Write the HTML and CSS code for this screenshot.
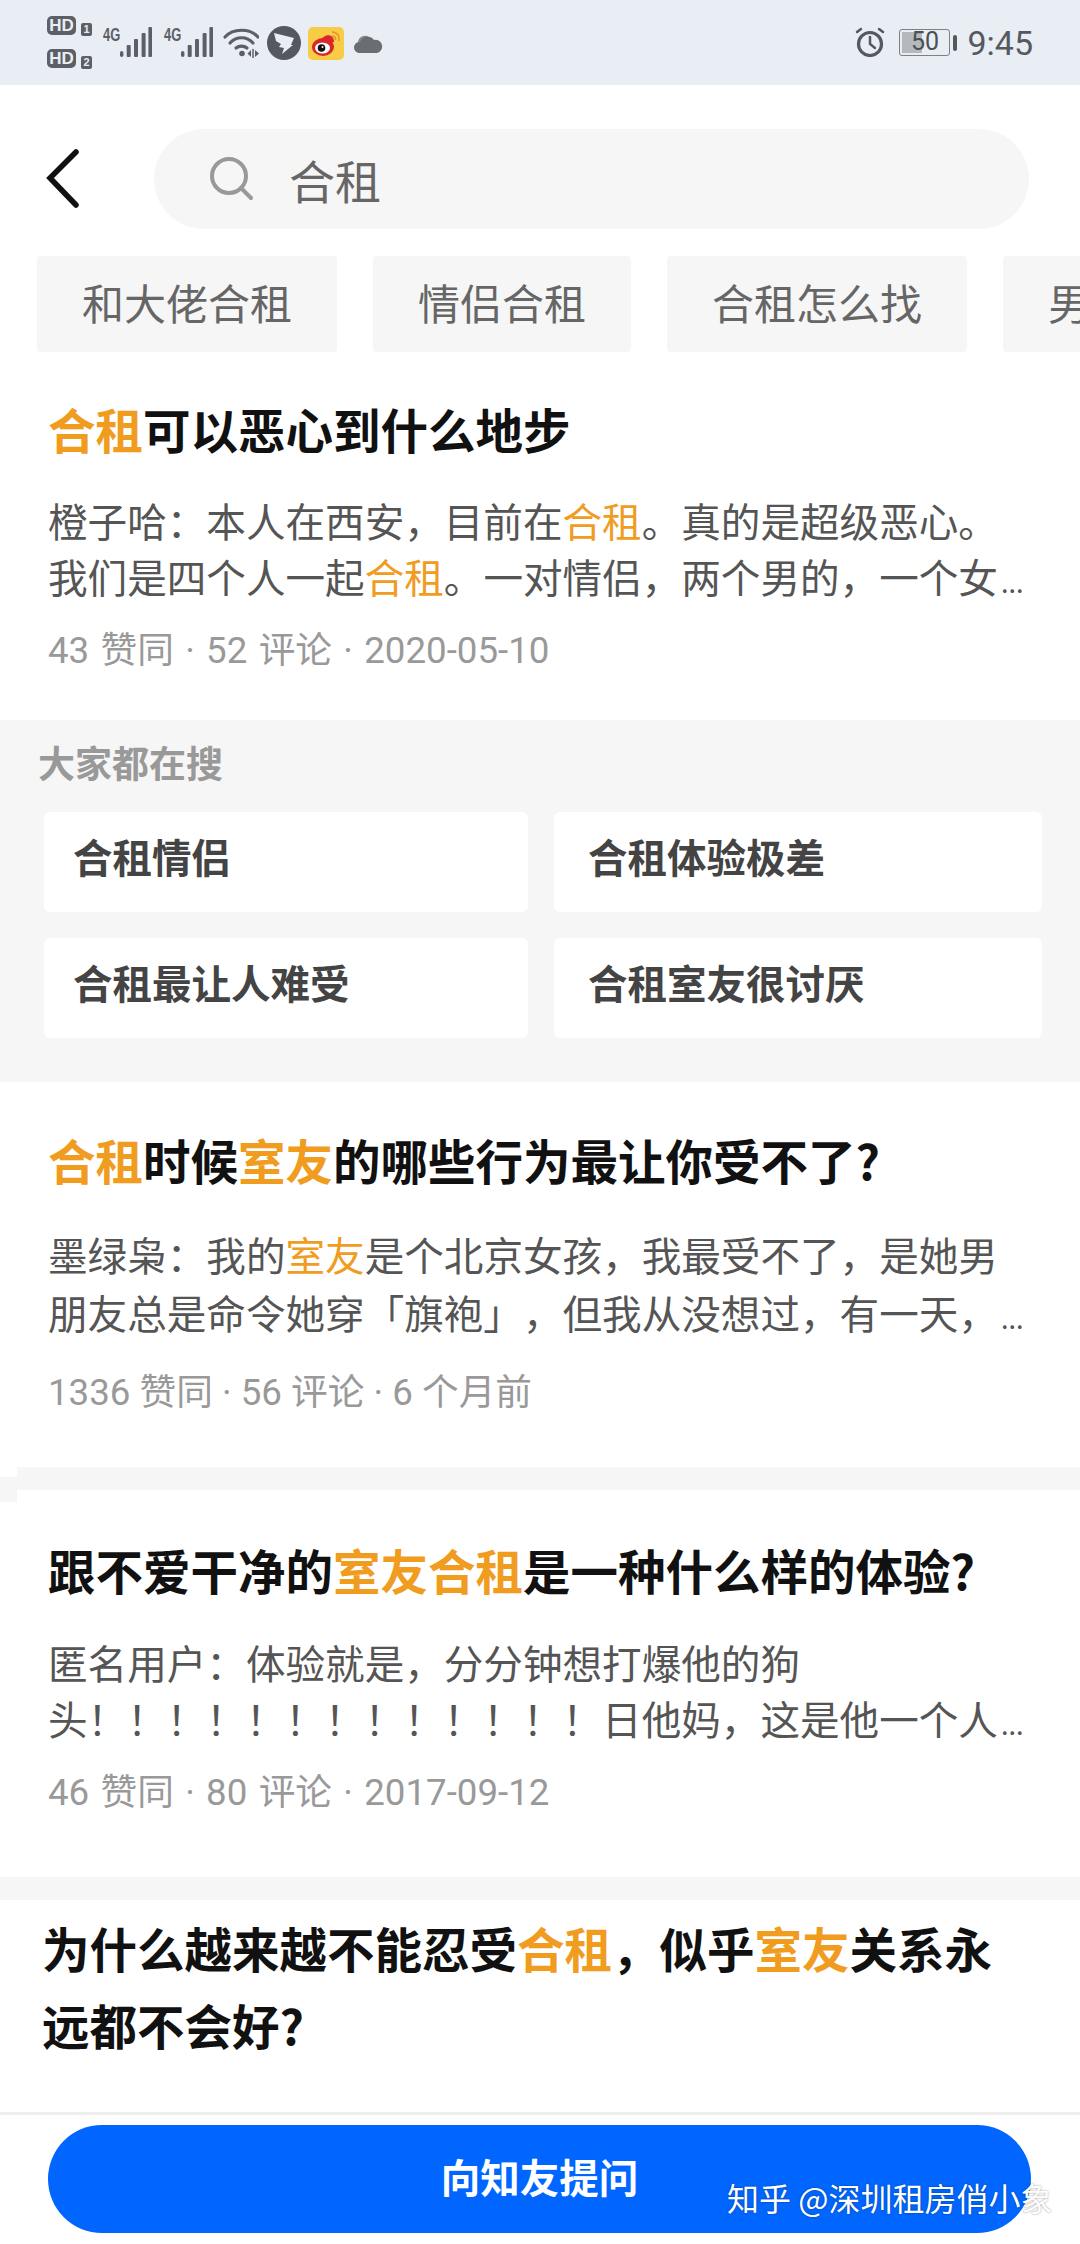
FILE: index.html
```html
<!DOCTYPE html>
<html lang="zh-CN">
<head>
  <meta charset="UTF-8">
  <meta name="viewport" content="width=device-width, initial-scale=1.0">
  <title>合租 - 搜索</title>
  <link rel="stylesheet" href="styles.css">
</head>
<body>

  <!-- Status bar -->
  <div class="statusbar">
    <div class="status-left">
      <div class="hd-stack">
        <div class="hd-row"><span class="hd">HD</span><span class="sim">1</span></div>
        <div class="hd-row"><span class="hd">HD</span><span class="sim">2</span></div>
      </div>
      <div class="signal">
        <span class="net">4G</span>
        <svg class="bars" viewBox="0 0 32 30"><rect x="0" y="24" width="3.400" height="6" rx="1.700"/><rect x="6.700" y="18" width="4" height="12" rx="1"/><rect x="14" y="12" width="4" height="18" rx="1"/><rect x="21.600" y="6" width="4" height="24" rx="1"/><rect x="28.400" y="0" width="3.600" height="30" rx="1"/></svg>
      </div>
      <div class="signal">
        <span class="net">4G</span>
        <svg class="bars" viewBox="0 0 32 30"><rect x="0" y="24" width="3.400" height="6" rx="1.700"/><rect x="6.700" y="18" width="4" height="12" rx="1"/><rect x="14" y="12" width="4" height="18" rx="1"/><rect x="21.600" y="6" width="4" height="24" rx="1"/><rect x="28.400" y="0" width="3.600" height="30" rx="1"/></svg>
      </div>
      <svg class="wifi" viewBox="0 0 36 30" fill="none" stroke="#5c6066" stroke-width="3.200" stroke-linecap="round">
        <path d="M2 9 C10 0 27 0 35 9"/>
        <path d="M7 15 C13 8 24 8 30 15"/>
        <path d="M13 20 C16 17.500 21 17.500 24 20"/>
        <circle cx="19" cy="25.500" r="2.800" fill="#5c6066" stroke="none"/>
        <path d="M24.500 25.500 L28 22 V29 Z M32 22 L36 25.500 L32 29 Z" fill="#5c6066" stroke="none"/>
        <path d="M30 21.500 V29.500" stroke-width="1.500"/>
      </svg>
      <svg class="ding" viewBox="0 0 34 34">
        <circle cx="17" cy="17" r="17" fill="#55595f"/>
        <path d="M7 7 L27 12 L24 19 L26 19 L15 28 L17 22 L12 21 L14 18 L9 15 Z" fill="#e9edf4"/>
      </svg>
      <svg class="weibo" viewBox="0 0 36 33">
        <rect width="36" height="33" rx="5" fill="#f8cc45"/>
        <ellipse cx="15" cy="20" rx="11" ry="9" fill="#d9252c"/>
        <path d="M13 13 C17 6 26 7 26 15 L20 17 Z" fill="#d9252c"/>
        <ellipse cx="14.500" cy="21" rx="7.500" ry="5.500" fill="#fff"/>
        <circle cx="13.500" cy="21" r="3.800" fill="#111"/>
        <circle cx="14.500" cy="20" r="1" fill="#fff"/>
        <path d="M24 5 C29 5 32 9 31 14 M24 9 C26.500 9 28 11 27.500 13" fill="none" stroke="#e8912a" stroke-width="1.600"/>
      </svg>
      <svg class="cloud" viewBox="0 0 30 20">
        <path d="M6 20 A5.500 5.500 0 0 1 5 9.500 A7 7 0 0 1 16 4 L16 20 Z" fill="#85898e"/>
        <path d="M6 20 A5.500 5.500 0 0 1 7 9 A8 8 0 0 1 21 7 A6.500 6.500 0 0 1 24 20 Z" fill="#6a6e73"/>
      </svg>
    </div>
    <div class="status-right">
      <svg class="alarm" viewBox="0 0 30 30" fill="none" stroke="#55595f" stroke-width="3.200" stroke-linecap="round">
        <circle cx="15" cy="17" r="11.500"/>
        <path d="M15 10 L15 17 L20 21" stroke-width="2.500"/>
        <path d="M2 5 L6 2 M28 5 L24 2" stroke-width="2.500"/>
      </svg>
      <div class="battery">
        <div class="battery-body"><div class="battery-fill"></div><span class="battery-num">50</span></div>
        <div class="battery-tip"></div>
      </div>
      <span class="clock">9:45</span>
    </div>
  </div>

  <!-- Search row -->
  <div class="search-row">
    <svg class="back" viewBox="0 0 34 60" fill="none" stroke="#111" stroke-width="5.500" stroke-linecap="round" stroke-linejoin="miter">
      <path d="M30 3 L4 29 L30 56"/>
    </svg>
    <div class="search-box">
      <svg class="search-icon" viewBox="0 0 44 44" fill="none" stroke="#999" stroke-width="4" stroke-linecap="round">
        <circle cx="19" cy="19" r="17"/>
        <path d="M31 31 L41 41"/>
      </svg>
      <span>合租</span>
    </div>
  </div>

  <div class="chips">
    <div class="chip">和大佬合租</div>
    <div class="chip">情侣合租</div>
    <div class="chip">合租怎么找</div>
    <div class="chip">男生合租</div>
  </div>

  <!-- Result 1 -->
  <div class="item item-first">
    <div class="title"><em>合租</em>可以恶心到什么地步</div>
    <div class="snippet">
      <div>橙子哈：本人在西安，目前在<em>合租</em>。真的是超级恶心。</div>
      <div>我们是四个人一起<em>合租</em>。一对情侣，两个男的，一个女<span class="more">...</span></div>
    </div>
    <div class="meta meta-wide">43 赞同 · 52 评论 · 2020-05-10</div>
  </div>

  <!-- Everybody is searching -->
  <div class="related">
    <div class="related-title">大家都在搜</div>
    <div class="related-grid">
      <div class="related-card">合租情侣</div>
      <div class="related-card">合租体验极差</div>
      <div class="related-card">合租最让人难受</div>
      <div class="related-card">合租室友很讨厌</div>
    </div>
  </div>

  <!-- Result 2 -->
  <div class="item item-second">
    <div class="title"><em>合租</em>时候<em>室友</em>的哪些行为最让你受不了?</div>
    <div class="snippet">
      <div>墨绿枭：我的<em>室友</em>是个北京女孩，我最受不了，是她男</div>
      <div>朋友总是命令她穿「旗袍」，但我从没想过，有一天，<span class="more">...</span></div>
    </div>
    <div class="meta">1336 赞同 · 56 评论 · 6 个月前</div>
  </div>
  <div class="band band-step"></div>

  <!-- Result 3 -->
  <div class="item item-third">
    <div class="title">跟不爱干净的<em>室友合租</em>是一种什么样的体验?</div>
    <div class="snippet">
      <div>匿名用户：体验就是，分分钟想打爆他的狗</div>
      <div>头！！！！！！！！！！！！！日他妈，这是他一个人<span class="more">...</span></div>
    </div>
    <div class="meta meta-wide">46 赞同 · 80 评论 · 2017-09-12</div>
  </div>
  <div class="band"></div>

  <!-- Result 4, cut off by the footer -->
  <div class="item item-last">
    <div class="title">为什么越来越不能忍受<em>合租</em>，似乎<em>室友</em>关系永</div>
    <div class="title">远都不会好?</div>
  </div>

  <div class="footer">
    <div class="ask-btn">向知友提问</div>
    <div class="watermark">知乎 @深圳租房俏小象</div>
  </div>

</body>
</html>
```

FILE: styles.css
```css
* {
  box-sizing: border-box;
}
html, body {
  margin: 0;
  padding: 0;
}
body {
  width: 1080px;
  height: 2244px;
  overflow: hidden;
  background: #fff;
  font-family: "Noto Sans CJK SC", sans-serif;
}
em {
  font-style: normal;
  color: #f09c1f;
}

/* status bar */
.statusbar {
  height: 85px;
  background: #e9edf4;
  display: flex;
  justify-content: space-between;
  padding: 16px 47px 0 47px;
}
.status-left {
  display: flex;
  align-items: flex-start;
}
.hd-stack {
  width: 56px;
  display: flex;
  flex-direction: column;
  gap: 13px;
}
.hd-row {
  display: flex;
  align-items: flex-start;
  gap: 5px;
  height: 20px;
}
.hd {
  width: 29px;
  height: 19px;
  background: #5c6066;
  color: #e9edf4;
  border-radius: 5px;
  font: bold 17px/19px "Liberation Sans", sans-serif;
  text-align: center;
}
.sim {
  width: 11px;
  height: 13px;
  margin-top: 7px;
  background: #5c6066;
  color: #e9edf4;
  border-radius: 2px;
  font: bold 11px/13px "Liberation Sans", sans-serif;
  text-align: center;
}
.signal {
  width: 61px;
  height: 40px;
  margin-top: 11px;
  display: flex;
}
.net {
  width: 17px;
  color: #5c6066;
  font: bold 19px/16px "Liberation Sans", sans-serif;
  transform: scaleX(0.68);
  transform-origin: left top;
}
.bars {
  width: 32px;
  height: 30px;
  fill: #5c6066;
}
.wifi {
  width: 36px;
  height: 30px;
  margin: 12px 8px 0 -2px;
}
.ding {
  width: 34px;
  height: 34px;
  margin: 10px 7px 0 0;
}
.weibo {
  width: 36px;
  height: 33px;
  margin: 11px 9px 0 0;
}
.cloud {
  width: 30px;
  height: 20px;
  margin-top: 17px;
}
.status-right {
  display: flex;
  align-items: flex-start;
  color: #55595f;
}
.alarm {
  width: 30px;
  height: 30px;
  margin: 11px 14px 0 0;
}
.battery {
  display: flex;
  align-items: center;
  gap: 3px;
  height: 27px;
  margin: 13px 10px 0 0;
}
.battery-body {
  position: relative;
  width: 51px;
  height: 27px;
  border: 1.500px solid #7d8186;
  border-radius: 3px;
  text-align: center;
  font: 25px/24px "Roboto", sans-serif;
  color: #4c5055;
}
.battery-fill {
  position: absolute;
  left: 2px;
  top: 2px;
  bottom: 2px;
  width: 20px;
  background: #b5b8bc;
}
.battery-num {
  position: relative;
}
.battery-tip {
  width: 4px;
  height: 16px;
  background: #55595f;
  border-radius: 2px;
}
.clock {
  font: 34px/40px "Roboto", sans-serif;
  margin-top: 7px;
}

/* search row */
.search-row {
  display: flex;
  align-items: center;
  height: 100px;
  margin-top: 44px;
  padding-left: 46px;
}
.back {
  width: 34px;
  height: 60px;
}
.search-box {
  width: 875px;
  height: 100px;
  margin-left: 74px;
  padding-left: 56px;
  background: #f6f6f6;
  border-radius: 50px;
  display: flex;
  align-items: center;
  gap: 35px;
  color: #666;
  font-size: 46px;
  line-height: 94px;
}
.search-icon {
  width: 44px;
  height: 44px;
}
.chips {
  display: flex;
  gap: 36px;
  margin-top: 27px;
  padding-left: 37px;
  overflow: hidden;
}
.chip {
  flex: none;
  height: 96px;
  padding: 0 45px;
  background: #f6f6f6;
  border-radius: 4px;
  color: #666;
  font-size: 42px;
  line-height: 92px;
}

/* result items */
.item {
  padding: 47px 48px 0;
}
.item-first {
  height: 368px;
}
.item-second {
  height: 385px;
  padding-top: 48px;
}
.item-third {
  height: 387px;
  margin-top: -12px;
  padding-top: 50px;
}
.item-last {
  height: 212px;
  padding: 9px 42px 0;
}
.title {
  font-size: 47.500px;
  font-weight: bold;
  line-height: 60px;
  color: #111;
  white-space: nowrap;
}
.item-last .title {
  line-height: 77px;
}
.snippet {
  margin-top: 34px;
  font-size: 39.600px;
  line-height: 56px;
  color: #555;
  white-space: nowrap;
  text-spacing-trim: space-all;
}
.item-first .snippet {
  margin-top: 33px;
}
.item-second .snippet {
  margin-top: 35px;
  line-height: 58px;
}
.more {
  font-size: 27px;
  line-height: 0;
  margin-left: 3px;
}
.meta {
  margin-top: 25px;
  font-family: "Roboto", "Noto Sans CJK SC", sans-serif;
  font-size: 36.700px;
  line-height: 44px;
  color: #999;
  white-space: nowrap;
}
.meta-wide {
  word-spacing: 2.200px;
}
.item-second .meta {
  margin-top: 30px;
}
.band {
  height: 23px;
  background: #f6f6f6;
}
/* the band steps down at its left edge in the screenshot */
.band-step {
  height: 35px;
  background:
    linear-gradient(#f6f6f6, #f6f6f6) 17px 0 / 100% 23px no-repeat,
    linear-gradient(#f6f6f6, #f6f6f6) 0 10px / 17px 25px no-repeat;
}

/* everybody is searching */
.related {
  height: 362px;
  background: #f6f6f6;
  padding: 21px 40px 0 38px;
}
.related-title {
  font-size: 37px;
  font-weight: bold;
  line-height: 42px;
  color: #999;
}
.related-grid {
  display: grid;
  grid-template-columns: 484px 488px;
  grid-auto-rows: 100px;
  gap: 26px 26px;
  margin-top: 29px;
  margin-left: 6px;
}
.related-card {
  background: #fff;
  border-radius: 6px;
  padding-left: 29px;
  font-size: 39.500px;
  font-weight: bold;
  line-height: 88px;
  color: #444;
}
.related-card:nth-child(even) {
  padding-left: 34px;
}

/* bottom button */
.footer {
  position: relative;
  height: 132px;
  border-top: 3px solid #eeeeee;
  padding: 10px 49px 0 48px;
}
.ask-btn {
  height: 108px;
  background: #0066ff;
  border-radius: 54px;
  color: #fff;
  font-size: 39.500px;
  font-weight: bold;
  line-height: 101px;
  text-align: center;
}
.watermark {
  position: absolute;
  left: 727px;
  top: 60px;
  color: #fff;
  font-size: 32px;
  line-height: 44px;
  white-space: nowrap;
  text-shadow: 0 0 2px rgba(0, 0, 0, 0.45);
}
```
